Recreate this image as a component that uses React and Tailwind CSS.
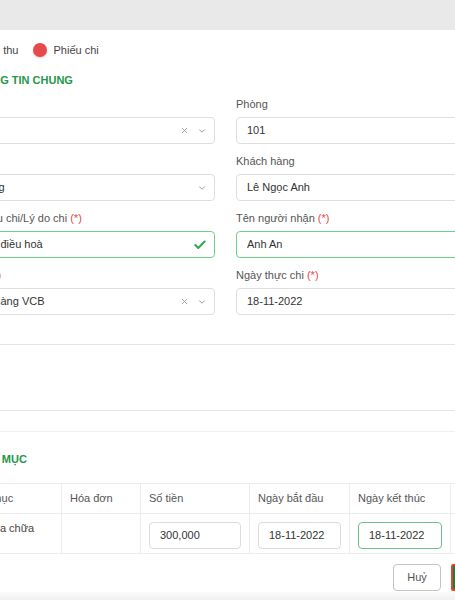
import { Check, X, ChevronDown } from 'lucide-react'

const font = { fontFamily: '"Liberation Sans", Arial, sans-serif' }

function Label({ text, required }) {
  return (
    <div className="h-[14px] mb-[6px] text-[11px] leading-[14px] text-[#555] whitespace-nowrap">
      {text}
      {required && <span className="text-[#e5484d]"> (*)</span>}
    </div>
  )
}

function Field({ label, required, value, clear, chevron, ok, focus }) {
  return (
    <div className="min-w-0">
      <Label text={label} required={required} />
      <div
        className={`h-[27px] rounded-[4px] border flex items-center pl-[10px] pr-[7px] text-[11px] text-[#333] ${
          focus ? 'border-[#6fd08e]' : 'border-[#dedede]'
        }`}
      >
        <span className="flex-1 whitespace-nowrap overflow-hidden">{value}</span>
        {clear && <X size={9} strokeWidth={2} className="text-[#8a8a8a] mr-[8px]" />}
        {chevron && <ChevronDown size={10} strokeWidth={2} className="text-[#8a8a8a]" />}
        {ok && <Check size={14} strokeWidth={3.5} className="text-[#2fa84f]" />}
      </div>
    </div>
  )
}

function CellInput({ value, focus }) {
  return (
    <div
      className={`h-[27px] rounded-[4px] border flex items-center pl-[10px] text-[11px] text-[#333] ${
        focus ? 'border-[#6cc28a]' : 'border-[#dcdcdc]'
      }`}
    >
      {value}
    </div>
  )
}

export default function App() {
  const cols = [107, 79, 109, 100, 101, 47]
  const heads = ['Danh mục', 'Hóa đơn', 'Số tiền', 'Ngày bắt đầu', 'Ngày kết thúc', '']

  return (
    <div className="w-[455px] h-[600px] overflow-hidden bg-white flex flex-col" style={font}>
      <div className="h-[30px] shrink-0 bg-[#e9e9e9]" />

      <div className="flex-1">
        <div className="-ml-[46px] w-[543px]">
          {/* loại phiếu */}
          <div className="mt-[10px] h-[20px] -ml-[2px] flex items-center text-[11px] text-[#444]">
            <span className="w-[14px] h-[14px] rounded-full border border-[#cfcfcf] bg-white" />
            <span className="ml-[6px]">Phiếu thu</span>
            <span className="ml-[15px] w-[14px] h-[14px] rounded-full bg-[#e84a4a] shadow-[0_1px_2px_rgba(0,0,0,0.2)]" />
            <span className="ml-[6px]">Phiếu chi</span>
          </div>

          <div className="mt-[13px] pl-[15px] h-[14px] leading-[14px] text-[11px] font-bold text-[#23974a]">
            THÔNG TIN CHUNG
          </div>

          <div className="mt-[10px] grid grid-cols-2 gap-x-[21px] gap-y-[10px]">
            <Field label="Tòa nhà" value="A1" clear chevron />
            <Field label="Phòng" value="101" />
            <Field label="Loại" value="Thường" chevron />
            <Field label="Khách hàng" value="Lê Ngọc Anh" />
            <Field label="Tên phiếu chi/Lý do chi" required value="Bảo trì điều hoà" ok focus />
            <Field label="Tên người nhận" required value="Anh An" focus />
            <Field label="Nguồn" required value="Ngân hàng VCB" clear chevron />
            <Field label="Ngày thực chi" required value="18-11-2022" />
          </div>

          {/* ghi chú */}
          <div className="mt-[10px]">
            <div className="h-[14px] mb-[5px] text-[11px] leading-[14px] text-[#555]">Ghi chú</div>
            <div className="h-[67px] rounded-[4px] border border-[#e4e4e4]" />
          </div>

          <div className="mt-[20px] border-t border-[#efefef]" />

          <div className="mt-[20px] pl-[13px] h-[14px] leading-[14px] text-[11px] font-bold text-[#23974a]">
            DANH MỤC
          </div>

          <table className="mt-[17px] w-[543px] table-fixed border-collapse text-[11px]">
            <colgroup>
              {cols.map((w, i) => (
                <col key={i} style={{ width: w }} />
              ))}
            </colgroup>
            <thead>
              <tr className="h-[30px]">
                {heads.map((h, i) => (
                  <th
                    key={i}
                    className="border border-[#ececec] px-[8px] text-left font-normal text-[#555] whitespace-nowrap"
                  >
                    {h}
                  </th>
                ))}
              </tr>
            </thead>
            <tbody>
              <tr className="h-[39px]">
                <td className="border border-[#ececec] px-[8px] pt-[7px] align-top leading-[14px] text-[#444] whitespace-nowrap">
                  Tiền sửa chữa
                </td>
                <td className="border border-[#ececec]" />
                <td className="border border-[#ececec] px-[8px] pt-[8px] pb-[4px] align-top">
                  <CellInput value="300,000" />
                </td>
                <td className="border border-[#ececec] px-[8px] pt-[8px] pb-[4px] align-top">
                  <CellInput value="18-11-2022" />
                </td>
                <td className="border border-[#ececec] px-[8px] pt-[8px] pb-[4px] align-top">
                  <CellInput value="18-11-2022" focus />
                </td>
                <td className="border border-[#ececec]" />
              </tr>
            </tbody>
          </table>

          {/* footer */}
          <div className="mt-[10px] flex justify-end gap-[10px]">
            <button className="h-[27px] w-[48px] rounded-[4px] border border-[#c4c4c4] bg-white text-[11px] text-[#555]">
              Huỷ
            </button>
            <button className="h-[27px] w-[46px] rounded-[2px] border-2 border-[#e8402f] bg-[#1d7a43] text-[11px] text-white">
              Lưu
            </button>
          </div>
        </div>
      </div>

      <div className="h-[8px] shrink-0 bg-gradient-to-b from-[#fbfbfb] to-[#f1f1f1]" />
    </div>
  )
}
